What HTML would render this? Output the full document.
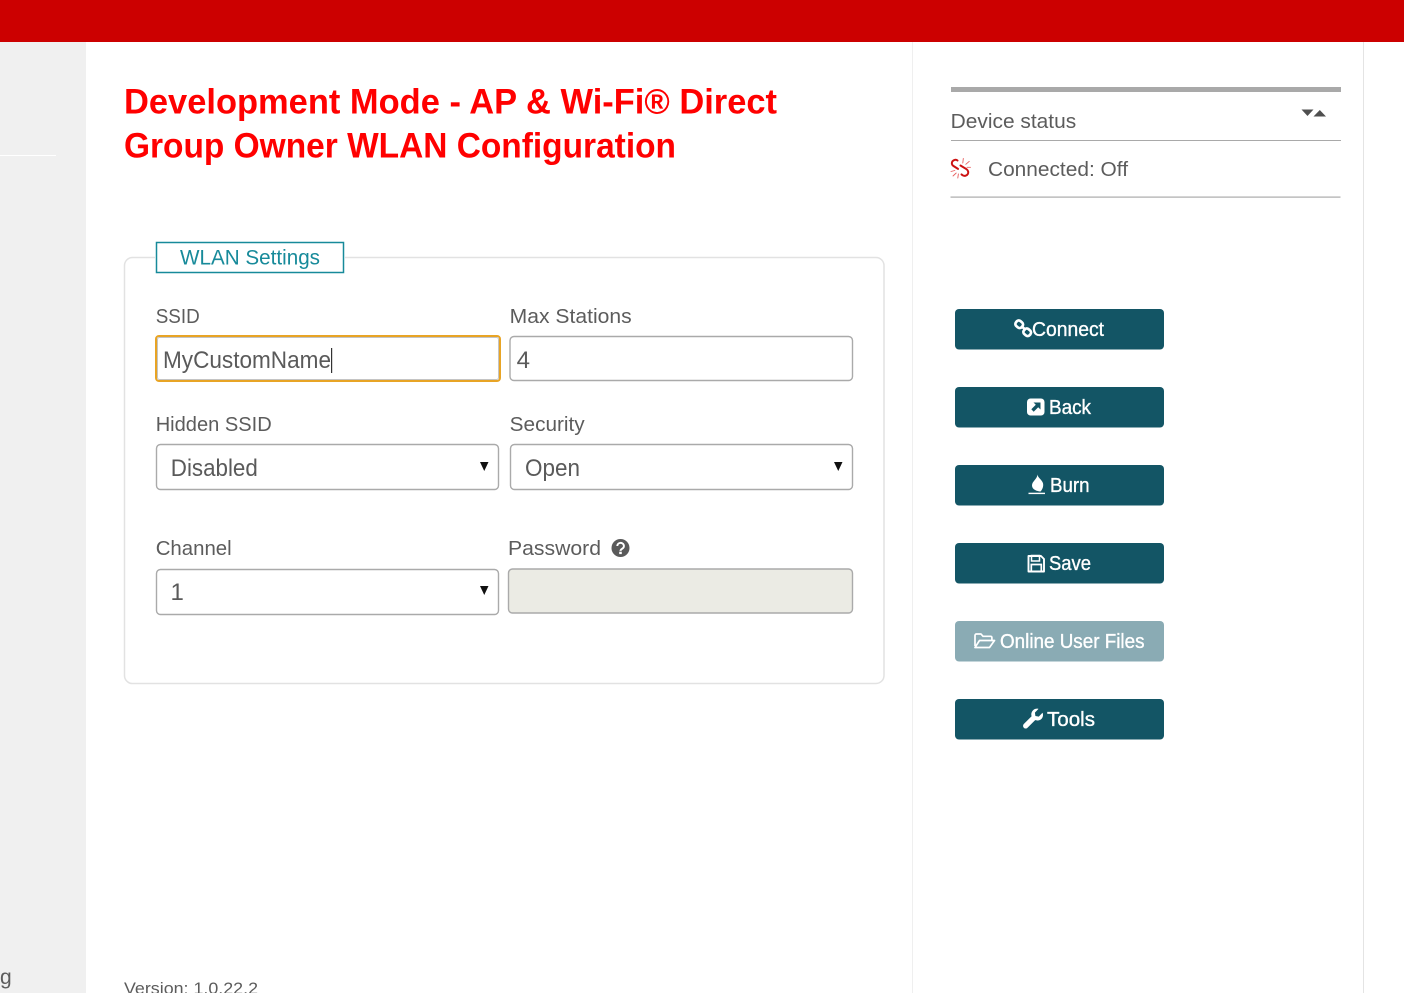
<!DOCTYPE html>
<html lang="en">
<head>
<meta charset="utf-8">
<title>WLAN Configuration</title>
<style>
html,body{margin:0;padding:0;background:#fff;width:1404px;height:993px;overflow:hidden}
svg{display:block;position:absolute;left:0;top:0}
text{font-family:"Liberation Sans",sans-serif}
.l{font-size:20.5px;fill:#5c5c5c}
.v{font-size:24px;fill:#5a5a5a}
.b{font-size:20px;fill:#fff;stroke:#fff;stroke-width:.35px}
</style>
</head>
<body>
<svg width="1404" height="993" viewBox="0 0 1404 993" xmlns="http://www.w3.org/2000/svg">
<rect x="0" y="0" width="86" height="993" fill="#f0f0f0"/>
<rect x="0" y="155" width="56" height="1" fill="#ffffff"/>
<rect x="912" y="42" width="1" height="951" fill="#efefef"/>
<rect x="1363" y="42" width="1" height="951" fill="#e4e4e4"/>
<rect x="0" y="0" width="1404" height="42" fill="#cc0000"/>

<text x="124" y="113.500" font-size="35" font-weight="700" fill="#ff0000" textLength="653" lengthAdjust="spacingAndGlyphs">Development Mode - AP &amp; Wi-Fi® Direct</text>
<text x="124" y="157.500" font-size="35" font-weight="700" fill="#ff0000" textLength="552" lengthAdjust="spacingAndGlyphs">Group Owner WLAN Configuration</text>

<rect x="124.500" y="257.500" width="759.500" height="426" rx="8" fill="#fff" stroke="#e2e2e2" stroke-width="1.500"/>
<rect x="155" y="250" width="190" height="16" fill="#fff"/>
<rect x="156.500" y="242.500" width="187" height="30" fill="#fff" stroke="#178a9a" stroke-width="1.500"/>
<text x="180" y="264.500" font-size="21" fill="#178a9a" textLength="140" lengthAdjust="spacingAndGlyphs">WLAN Settings</text>

<text class="l" x="155.700" y="323" textLength="44" lengthAdjust="spacingAndGlyphs">SSID</text>
<text class="l" x="509.700" y="323" textLength="122" lengthAdjust="spacingAndGlyphs">Max Stations</text>
<rect x="156" y="336" width="344" height="45" rx="3" fill="#fff" stroke="#e8a425" stroke-width="2"/>
<rect x="157.500" y="337.500" width="341" height="42" rx="2" fill="none" stroke="#c4c4c4" stroke-width="1"/>
<text class="v" x="163" y="368" textLength="168" lengthAdjust="spacingAndGlyphs">MyCustomName</text>
<rect x="331" y="348" width="1.200" height="25" fill="#333"/>
<rect x="510" y="336.500" width="342.500" height="44" rx="4" fill="#fff" stroke="#aaa" stroke-width="1.400"/>
<text class="v" x="516.600" y="368">4</text>

<text class="l" x="155.700" y="431" textLength="116" lengthAdjust="spacingAndGlyphs">Hidden SSID</text>
<text class="l" x="509.700" y="431" textLength="75" lengthAdjust="spacingAndGlyphs">Security</text>
<rect x="156.500" y="444.500" width="342" height="45" rx="4" fill="#fff" stroke="#aaa" stroke-width="1.400"/>
<text class="v" x="170.800" y="476" textLength="87" lengthAdjust="spacingAndGlyphs">Disabled</text>
<path d="M480 462h8.500l-4.250 9z" fill="#111"/>
<rect x="510.500" y="444.500" width="342" height="45" rx="4" fill="#fff" stroke="#aaa" stroke-width="1.400"/>
<text class="v" x="525" y="476" textLength="55" lengthAdjust="spacingAndGlyphs">Open</text>
<path d="M834 462h8.500l-4.250 9z" fill="#111"/>

<text class="l" x="155.700" y="555" textLength="76" lengthAdjust="spacingAndGlyphs">Channel</text>
<text class="l" x="508" y="555" textLength="93" lengthAdjust="spacingAndGlyphs">Password</text>
<circle cx="620.500" cy="548" r="9" fill="#5a5a5a"/>
<path d="M617.300 546a3.300 3.100 0 1 1 4.900 2.700c-1.100.7-1.700 1.100-1.700 2.200" fill="none" stroke="#fff" stroke-width="2"/>
<rect x="619.200" y="551.700" width="2.600" height="2.400" fill="#fff"/>
<rect x="156.500" y="569.500" width="342" height="45" rx="4" fill="#fff" stroke="#aaa" stroke-width="1.400"/>
<text class="v" x="170.500" y="600">1</text>
<path d="M480 586h8.500l-4.250 9z" fill="#111"/>
<rect x="508.500" y="569" width="344" height="44" rx="4" fill="#ebebe4" stroke="#aaa" stroke-width="1.400"/>

<rect x="951" y="87" width="390" height="5" fill="#a9a9a9"/>
<text x="950.700" y="128" font-size="20.500" fill="#5c5c5c" textLength="125.500" lengthAdjust="spacingAndGlyphs">Device status</text>
<path d="M1301.500 109.500h12l-6 6.500z" fill="#4f4f4f"/>
<path d="M1313.500 116.500h12.500l-6.200-6.500z" fill="#4f4f4f"/>
<rect x="951" y="140" width="390" height="1" fill="#a9a9a9"/>
<g fill="none" stroke="#cc1111" stroke-linecap="round" stroke-linejoin="round">
<path d="M957.500 160.500c-1.500-1.200-3.800-.8-5 .7-1.200 1.600-.8 3.600.8 4.700l4.700 3" stroke-width="2"/>
<path d="M960.500 165.500l6 3.700c1.700 1.100 2.300 3.300 1.200 5-1.100 1.700-3.300 2.100-5 1.100l-1.200-.9" stroke-width="2"/>
<path d="M963.500 163.500l.6-.9c1-1.700.4-3.800-1.300-4.700l-.8-.4" stroke-width="0" />
<path d="M962.800 163l.5-4.500M965.800 164.300l3.500-3M967 167.300h3.500M951 171.500l3.800-1M953 176l3.200-3M957.800 178l.6-4" stroke-width=".9" stroke="#e86060"/>
</g>
<text x="988" y="176" font-size="20.500" fill="#5c5c5c" textLength="140" lengthAdjust="spacingAndGlyphs">Connected: Off</text>
<rect x="950.500" y="196.500" width="390" height="1.200" fill="#ababab"/>

<g fill="#135565">
<rect x="955" y="309" width="209" height="40.500" rx="4"/>
<rect x="955" y="387" width="209" height="40.500" rx="4"/>
<rect x="955" y="465" width="209" height="40.500" rx="4"/>
<rect x="955" y="543" width="209" height="40.500" rx="4"/>
<rect x="955" y="699" width="209" height="40.500" rx="4"/>
</g>
<rect x="955" y="621" width="209" height="40.500" rx="4" fill="#8aabb4"/>

<!-- Connect -->
<g fill="none" stroke="#fff" stroke-width="2.700">
<rect x="1015.500" y="321" width="7.500" height="6.500" rx="2.800" transform="rotate(40 1019.200 324.200)"/>
<rect x="1023.500" y="329" width="7.500" height="6.500" rx="2.800" transform="rotate(40 1027.200 332.200)"/>
<path d="M1021 326l5 4"/>
</g>
<text class="b" x="1032" y="336" textLength="72" lengthAdjust="spacingAndGlyphs">Connect</text>

<!-- Back -->
<rect x="1027" y="398.500" width="17.500" height="17" rx="3.500" fill="#fff"/>
<path d="M1033.500 402.500h7v7l-2.300-2.300-4.500 4.500-2.400-2.400 4.500-4.500z" fill="#135565"/>
<text class="b" x="1049" y="414" textLength="42" lengthAdjust="spacingAndGlyphs">Back</text>

<!-- Burn -->
<path d="M1037.500 474.500c.2 3.200 4.500 5.200 5.500 8.700.7 2.800-.5 6.300-2.500 8.300-3.500-.2-8.500-2-8.500-6 0-4.300 5-6 5.500-11z" fill="#fff"/>
<rect x="1028.500" y="492.700" width="16.500" height="1.400" fill="#fff"/>
<text class="b" x="1050" y="492" textLength="39.500" lengthAdjust="spacingAndGlyphs">Burn</text>

<!-- Save -->
<path d="M1028.500 556h12.500l3 3v12.500h-15.500z" fill="none" stroke="#fff" stroke-width="1.900" stroke-linejoin="round"/>
<path d="M1031.500 555.500h8v5.500h-8z" fill="none" stroke="#fff" stroke-width="1.500"/>
<path d="M1031.300 571v-6.500h10v6.500" fill="none" stroke="#fff" stroke-width="1.700"/>
<text class="b" x="1049" y="570" textLength="42" lengthAdjust="spacingAndGlyphs">Save</text>

<!-- Online User Files -->
<path d="M975 646v-10.500c0-.8.600-1.500 1.400-1.500h4.600l2 2.300h7.500c.8 0 1.400.6 1.400 1.400v2.300M975 647.500h14.500l5-7h-15z" fill="none" stroke="#fff" stroke-width="1.700" stroke-linejoin="round"/>
<text class="b" x="1000" y="648" textLength="144.500" lengthAdjust="spacingAndGlyphs">Online User Files</text>

<!-- Tools -->
<path d="M1043 714.500c.3 3.400-2.500 6.300-5.800 6-.8-.1-1.300-.2-1.900-.5l-7.800 7.700c-1 1-2.700 1-3.700 0s-1-2.700 0-3.700l7.800-7.800c-.7-2.300-.1-4.500 1.500-6 1.500-1.300 3.500-1.900 5.400-1.300l-3.600 3.700.5 3.400 3.400.6 3.700-3.800c.3.500.4 1 .5 1.700z" fill="#fff"/>
<text class="b" x="1047" y="726" textLength="48" lengthAdjust="spacingAndGlyphs">Tools</text>

<text x="124" y="994" font-size="16.500" fill="#5c5c5c" textLength="134" lengthAdjust="spacingAndGlyphs">Version: 1.0.22.2</text>
<text x="0" y="984" font-size="21" fill="#5c5c5c">g</text>
</svg>
</body>
</html>
